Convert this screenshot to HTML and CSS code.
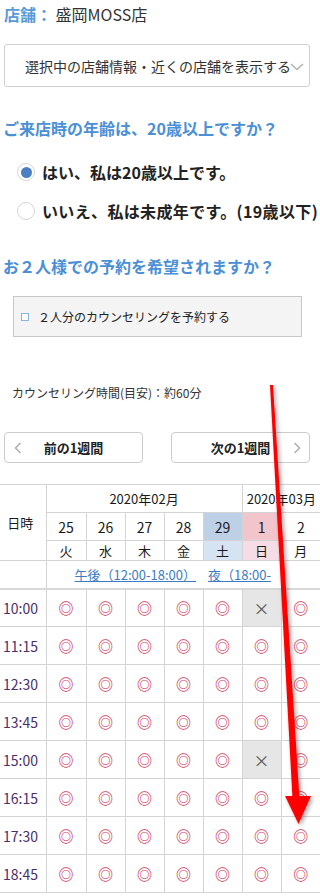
FILE: index.html
```html
<!DOCTYPE html>
<html lang="ja">
<head>
<meta charset="utf-8">
<title>予約</title>
<link rel="stylesheet" href="styles.css">
</head>
<body>
<div class="page">
  <p class="store"><span class="store-label">店舗：</span> 盛岡MOSS店</p>
  <div class="select">
    <span>選択中の店舗情報・近くの店舗を表示する</span>
    <svg class="chev" width="14" height="8" viewBox="0 0 14 8"><path d="M1 1 L7 6.5 L13 1" fill="none" stroke="#b4b4b4" stroke-width="1.6"/></svg>
  </div>

  <h2 class="q">ご来店時の年齢は、20歳以上ですか？</h2>
  <div class="radios">
    <label class="radio"><span class="dot on"></span>はい、私は20歳以上です。</label>
    <label class="radio wide"><span class="dot"></span>いいえ、私は未成年です。(19歳以下)</label>
  </div>

  <h2 class="q q2">お２人様での予約を希望されますか？</h2>
  <div class="pair"><span class="cb"></span><span>２人分のカウンセリングを予約する</span></div>

  <p class="note">カウンセリング時間(目安)：約60分</p>

  <div class="weeknav">
    <button class="wbtn"><svg width="8" height="12" viewBox="0 0 8 12"><path d="M6.5 1 L1.5 6 L6.5 11" fill="none" stroke="#b0b0b0" stroke-width="1.6"/></svg><span>前の1週間</span><span></span></button>
    <button class="wbtn"><span></span><span>次の1週間</span><svg width="8" height="12" viewBox="0 0 8 12"><path d="M1.5 1 L6.5 6 L1.5 11" fill="none" stroke="#b0b0b0" stroke-width="1.6"/></svg></button>
  </div>

  <div class="table-wrap">
    <table class="cal">
      <colgroup>
        <col class="c-time"><col class="c-first"><col class="c-day"><col class="c-day"><col class="c-day"><col class="c-day"><col class="c-day"><col class="c-day">
      </colgroup>
      <thead>
        <tr class="r-month">
          <th class="daytime" rowspan="3">日時</th>
          <th colspan="5">2020年02月</th>
          <th colspan="2" class="m2">2020年03月</th>
        </tr>
        <tr class="r-date">
          <th>25</th><th>26</th><th>27</th><th>28</th><th class="sat">29</th><th class="sun">1</th><th>2</th>
        </tr>
        <tr class="r-wday">
          <th>火</th><th>水</th><th>木</th><th>金</th><th class="sat-l">土</th><th class="sun-l">日</th><th>月</th>
        </tr>
        <tr class="r-range">
          <td></td>
          <td colspan="7" class="range"><a href="#">午後（12:00-18:00）</a><a href="#">夜（18:00-</a></td>
        </tr>
      </thead>
      <tbody>
        <tr><th>10:00</th><td>◎</td><td>◎</td><td>◎</td><td>◎</td><td>◎</td><td class="x">×</td><td>◎</td></tr>
        <tr><th>11:15</th><td>◎</td><td>◎</td><td>◎</td><td>◎</td><td>◎</td><td>◎</td><td>◎</td></tr>
        <tr><th>12:30</th><td>◎</td><td>◎</td><td>◎</td><td>◎</td><td>◎</td><td>◎</td><td>◎</td></tr>
        <tr><th>13:45</th><td>◎</td><td>◎</td><td>◎</td><td>◎</td><td>◎</td><td>◎</td><td>◎</td></tr>
        <tr><th>15:00</th><td>◎</td><td>◎</td><td>◎</td><td>◎</td><td>◎</td><td class="x">×</td><td>◎</td></tr>
        <tr><th>16:15</th><td>◎</td><td>◎</td><td>◎</td><td>◎</td><td>◎</td><td>◎</td><td>◎</td></tr>
        <tr><th>17:30</th><td>◎</td><td>◎</td><td>◎</td><td>◎</td><td>◎</td><td>◎</td><td>◎</td></tr>
        <tr><th>18:45</th><td>◎</td><td>◎</td><td>◎</td><td>◎</td><td>◎</td><td>◎</td><td>◎</td></tr>
      </tbody>
    </table>
  </div>

  <svg class="arrow" width="320" height="896" viewBox="0 0 320 896">
    <defs>
      <filter id="sh" x="-50%" y="-10%" width="200%" height="120%">
        <feDropShadow dx="2" dy="2" stdDeviation="2" flood-color="#000" flood-opacity="0.35"/>
      </filter>
    </defs>
    <g filter="url(#sh)" fill="#ff0000">
      <polygon points="270,385 273,385 299.5,799 292.5,799"/>
      <polygon points="285,796 311,796 298.5,824"/>
    </g>
  </svg>
</div>
</body>
</html>
```

FILE: styles.css
```css
* { box-sizing: border-box; }

body {
  margin: 0;
  font-family: "Noto Sans CJK JP", "Noto Sans", sans-serif;
  color: #333;
  background: #fff;
}

.page {
  position: relative;
  width: 320px;
  height: 896px;
  overflow: hidden;
  padding-top: 4px;
}

.store {
  margin: 0 0 0 4px;
  font-size: 16px;
  line-height: 20px;
  height: 20px;
  color: #333;
  white-space: nowrap;
}

.store-label {
  color: #5a9ad6;
  font-weight: bold;
}

.select {
  margin: 20px 0 0 4px;
  width: 306px;
  height: 43px;
  border: 1px solid #cfcfcf;
  border-radius: 3px;
  display: flex;
  align-items: center;
  padding-left: 20px;
  font-size: 14px;
  color: #333;
  white-space: nowrap;
}

.chev { margin-left: -1px; margin-top: 2px; }

.q {
  margin: 30px 0 0 3px;
  font-size: 16px;
  line-height: 22px;
  font-weight: bold;
  color: #4b8fd6;
  white-space: nowrap;
}

.q2 { margin-top: 32px; }

.radios {
  margin-top: 21px;
  display: flex;
  flex-direction: column;
  gap: 15px;
  padding-left: 17px;
}

.radio {
  display: flex;
  align-items: center;
  gap: 7px;
  height: 24px;
  font-size: 16px;
  font-weight: bold;
  color: #222;
  white-space: nowrap;
}

.radio.wide { letter-spacing: 0.35px; }

.dot {
  flex: none;
  width: 18px;
  height: 18px;
  border-radius: 50%;
  border: 1px solid #d6d6d6;
  background: #fff;
  display: flex;
  align-items: center;
  justify-content: center;
}

.dot.on::after {
  content: "";
  width: 11px;
  height: 11px;
  border-radius: 50%;
  background: #4a7fc2;
}

.pair {
  margin: 19px 0 0 13px;
  width: 289px;
  height: 41px;
  border: 1px solid #c8c8c8;
  background: #f4f4f4;
  display: flex;
  align-items: center;
  padding-left: 7px;
  gap: 9px;
  font-size: 12px;
  color: #222;
  white-space: nowrap;
}

.cb {
  flex: none;
  width: 8px;
  height: 8px;
  border: 1px solid #8ab4e0;
  background: #fff;
}

.note {
  margin: 47px 0 0 12px;
  font-size: 12px;
  line-height: 18px;
  color: #333;
  white-space: nowrap;
}

.weeknav {
  margin-top: 30px;
  padding-left: 4px;
  display: flex;
  gap: 28px;
}

.wbtn {
  width: 139px;
  height: 31px;
  border: 1px solid #cccccc;
  border-radius: 4px;
  background: #fff;
  display: grid;
  grid-template-columns: 25px 1fr 25px;
  align-items: center;
  justify-items: center;
  padding: 0;
  font-family: inherit;
  font-size: 13px;
  font-weight: bold;
  color: #222;
}

.table-wrap {
  margin-top: 21px;
  width: 320px;
  overflow: hidden;
}

.cal {
  width: 320px;
  border-collapse: collapse;
  table-layout: fixed;
  font-size: 13px;
  color: #1a1a1a;
}

.c-time { width: 46px; }
.c-first { width: 40px; }
.c-day { width: 39px; }

.cal th, .cal td {
  border: 1px solid #d4d4d4;
  padding: 0;
  text-align: center;
  font-weight: normal;
  white-space: nowrap;
  overflow: hidden;
}

.cal tr > :first-child { border-left: none; }
.cal tr > :last-child { border-right: none; }

.r-month th { height: 28px; }
.daytime { padding-right: 5px !important; }
.r-date th { height: 28px; font-size: 14px; }
.r-wday th { height: 20px; font-size: 13px; line-height: 18px; }

.sat { background: #bdd0e6; }
.sun { background: #f2c5cd; }
.sat-l { background: #d5e3f2; }
.sun-l { background: #f6dde5; }

.r-range td {
  height: 28px;
  border-bottom: 2px solid #d8d8d8;
}

.cal .range {
  text-align: left;
  padding-left: 28px;
}

.range a {
  color: #3c7cc3;
  text-decoration: underline;
  margin-right: 12px;
}

.cal tbody th {
  height: 38px;
  font-size: 14px;
  color: #4a2f6a;
  text-align: left;
  padding-left: 3px;
}

.cal tbody td {
  height: 38px;
  font-size: 15px;
  font-weight: bold;
  color: #cf3f66;
}

.cal tbody td.x {
  background: #e6e6e6;
  color: #555;
  font-size: 16px;
  font-weight: normal;
}

.arrow {
  position: absolute;
  left: 0;
  top: 0;
  pointer-events: none;
}
```
